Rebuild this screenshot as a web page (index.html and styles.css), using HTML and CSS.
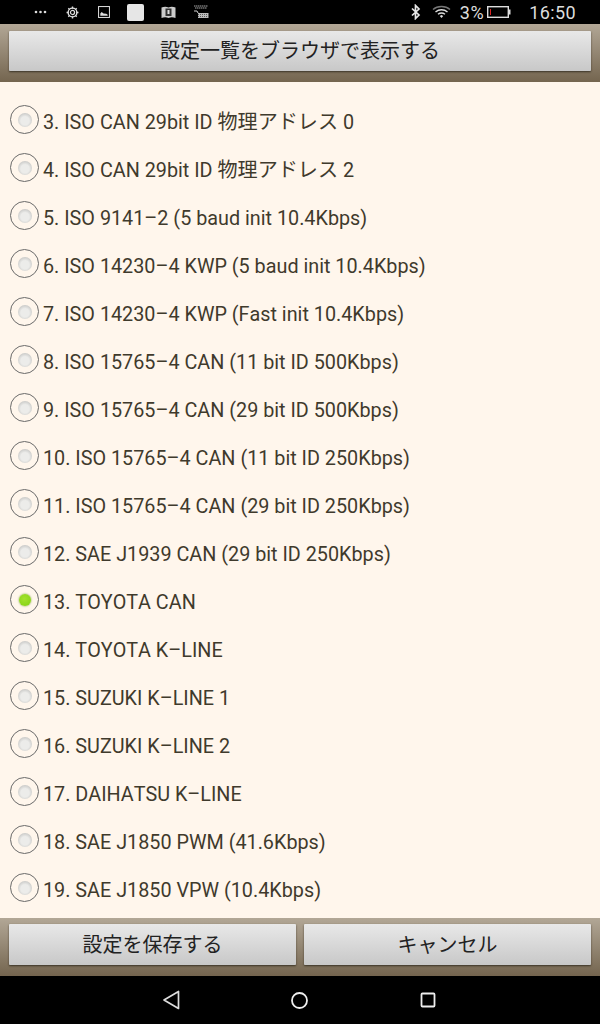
FILE: index.html
```html
<!DOCTYPE html>
<html lang="ja">
<head>
<meta charset="utf-8">
<title>設定</title>
<link rel="stylesheet" href="styles.css">
</head>
<body>
<div class="screen">
  <div class="status">
    <div class="status-left">
      <svg class="i-dots" width="13" height="4" viewBox="0 0 13 4"><circle cx="2" cy="2" r="1.300" fill="#ddd"/><circle cx="6.500" cy="2" r="1.300" fill="#ddd"/><circle cx="11" cy="2" r="1.300" fill="#ddd"/></svg>
      <svg class="i-gear" width="13" height="13" viewBox="0 0 14 14"><circle cx="7" cy="7" r="2.200" fill="none" stroke="#ddd" stroke-width="1.300"/><circle cx="7" cy="7" r="4.700" fill="none" stroke="#ddd" stroke-width="1.500"/><path d="M7 .6v2M7 11.400v2M.6 7h2M11.400 7h2M2.500 2.500l1.400 1.400M10.100 10.100l1.400 1.400M2.500 11.500l1.400-1.400M10.100 3.900l1.400-1.400" stroke="#ddd" stroke-width="1.500"/></svg>
      <svg class="i-pic" width="12" height="12" viewBox="0 0 13 13"><rect x=".6" y=".6" width="11.800" height="11.800" fill="none" stroke="#ddd" stroke-width="1.100"/><path d="M2.500 10.500V8l1.500-1.500 2 1.500 3 .5 1.500 1v1z" fill="#ddd"/></svg>
      <span class="i-white"></span>
      <svg class="i-book" width="15" height="13" viewBox="0 0 15 13"><path d="M.5 1.500C3 .5 5.500.5 7.500 1.500 9.500.5 12 .5 14.500 1.500V12C12 11 9.500 11 7.500 12 5.500 11 3 11 .5 12z" fill="#ccc"/><rect x="4.500" y="2.500" width="6" height="7.500" fill="#333"/><rect x="6.500" y="4" width="2" height="4" fill="#ddd"/></svg>
      <svg class="i-cart" width="16" height="14" viewBox="0 0 16 14"><path d="M1 1h14M2 3h12" stroke="#aaa" stroke-width="1" stroke-dasharray="1.500 .5"/><path d="M1 6h3l1 2" stroke="#ccc" stroke-width="1" fill="none"/><rect x="5" y="8" width="10.500" height="5" fill="#bbb"/><path d="M5 9.500h10.500M5 11.500h10.500" stroke="#444" stroke-width=".8" stroke-dasharray="1 1"/></svg>
    </div>
    <div class="status-right">
      <svg class="i-bt" width="10" height="16" viewBox="0 0 10 16"><path d="M1 4.500l7 6.500-3.500 3.500V1.500L8 5 1 11.500" fill="none" stroke="#e8e8e8" stroke-width="1.700"/></svg>
      <svg class="i-wifi" width="19" height="14" viewBox="0 0 19 14"><path d="M1 4.500C5.500.5 13.500.5 18 4.500" fill="none" stroke="#777" stroke-width="1.400"/><path d="M3.500 7C7 4 12 4 15.500 7" fill="none" stroke="#ddd" stroke-width="1.400"/><path d="M6 9.300C8 7.800 11 7.800 13 9.300" fill="none" stroke="#ddd" stroke-width="1.400"/><path d="M7.800 11l1.700-1 1.700 1-1.700 2z" fill="#ddd"/></svg>
      <span class="pct">3%</span>
      <svg class="i-batt" width="24" height="12" viewBox="0 0 24 12"><rect x=".7" y=".7" width="20.600" height="10.600" fill="none" stroke="#ddd" stroke-width="1.400"/><rect x="21.500" y="3.500" width="2" height="5" fill="#ddd"/><rect x="3" y="3" width="1" height="6" fill="#d22"/></svg>
      <span class="clock">16:50</span>
    </div>
  </div>

  <div class="bar bar-top">
    <button class="btn" type="button">設定一覧をブラウザで表示する</button>
  </div>

  <ul class="list">
    <li class="row"><span class="radio"></span><span class="label">3. ISO CAN 29bit ID <span class="cjk">物理アドレス</span> 0</span></li>
    <li class="row"><span class="radio"></span><span class="label">4. ISO CAN 29bit ID <span class="cjk">物理アドレス</span> 2</span></li>
    <li class="row"><span class="radio"></span><span class="label">5. ISO 9141–2 (5 baud init 10.4Kbps)</span></li>
    <li class="row"><span class="radio"></span><span class="label">6. ISO 14230–4 KWP (5 baud init 10.4Kbps)</span></li>
    <li class="row"><span class="radio"></span><span class="label">7. ISO 14230–4 KWP (Fast init 10.4Kbps)</span></li>
    <li class="row"><span class="radio"></span><span class="label">8. ISO 15765–4 CAN (11 bit ID 500Kbps)</span></li>
    <li class="row"><span class="radio"></span><span class="label">9. ISO 15765–4 CAN (29 bit ID 500Kbps)</span></li>
    <li class="row"><span class="radio"></span><span class="label">10. ISO 15765–4 CAN (11 bit ID 250Kbps)</span></li>
    <li class="row"><span class="radio"></span><span class="label">11. ISO 15765–4 CAN (29 bit ID 250Kbps)</span></li>
    <li class="row"><span class="radio"></span><span class="label">12. SAE J1939 CAN (29 bit ID 250Kbps)</span></li>
    <li class="row"><span class="radio on"></span><span class="label">13. TOYOTA CAN</span></li>
    <li class="row"><span class="radio"></span><span class="label">14. TOYOTA K–LINE</span></li>
    <li class="row"><span class="radio"></span><span class="label">15. SUZUKI K–LINE 1</span></li>
    <li class="row"><span class="radio"></span><span class="label">16. SUZUKI K–LINE 2</span></li>
    <li class="row"><span class="radio"></span><span class="label">17. DAIHATSU K–LINE</span></li>
    <li class="row"><span class="radio"></span><span class="label">18. SAE J1850 PWM (41.6Kbps)</span></li>
    <li class="row"><span class="radio"></span><span class="label">19. SAE J1850 VPW (10.4Kbps)</span></li>
  </ul>

  <div class="bar bar-bottom">
    <button class="btn" type="button">設定を保存する</button>
    <button class="btn" type="button">キャンセル</button>
  </div>

  <div class="nav">
    <svg width="18" height="20" viewBox="0 0 18 20"><path d="M15.500 1.500v17L1 10z" fill="none" stroke="#ddd" stroke-width="1.700" stroke-linejoin="round"/></svg>
    <svg width="17" height="17" viewBox="0 0 17 17"><circle cx="8.500" cy="8.500" r="7.500" fill="none" stroke="#eee" stroke-width="1.800"/></svg>
    <svg class="nav-square" width="16" height="16" viewBox="0 0 16 16"><rect x="1.500" y="1.500" width="13" height="13" rx="1" fill="none" stroke="#eee" stroke-width="1.800"/></svg>
  </div>
</div>
</body>
</html>
```
FILE: styles.css
```css
* { box-sizing: border-box; }
html, body { margin: 0; padding: 0; background: #000; }
body { font-family: Roboto, "Noto Sans CJK JP", sans-serif; }
.screen { width: 600px; height: 1024px; display: flex; flex-direction: column; overflow: hidden; }

.status { height: 24px; flex: none; background: #000; display: flex; justify-content: space-between; align-items: center; }
.status-left { display: flex; align-items: center; padding-left: 34px; }
.i-gear { margin-left: 19px; }
.i-pic { margin-left: 19px; }
.i-white { width: 17px; height: 17px; margin-left: 17px; background: #e6e6e6; border-radius: 2px; }
.i-book { margin-left: 17px; }
.i-cart { margin-left: 17px; }
.status-right { display: flex; align-items: center; padding-right: 24px; color: #ddd; font-size: 18px; }
.i-wifi { margin-left: 11px; }
.pct { margin-left: 9px; letter-spacing: .5px; }
.i-batt { margin-left: 3px; }
.clock { margin-left: 18px; letter-spacing: .4px; }

.bar { height: 58px; flex: none; display: flex; gap: 8px; padding: 7px 9px 11px; background: linear-gradient(#b2a796, #74654f); }
.bar-bottom { padding: 6px 9px 11px; }
.btn { flex: 1 1 0; min-width: 0; height: 100%; padding: 0; border: 0; border-radius: 1px; background: linear-gradient(#e8e8e8, #c8c8c8); box-shadow: 0 1px 2px rgba(30, 25, 15, .7); color: #222; font-family: inherit; font-size: 20px; line-height: 1; }

.list { height: 836px; flex: none; margin: 0; padding: 16px 0 4px; list-style: none; background: #fff6ec; }
.row { height: 48px; display: flex; align-items: center; padding-left: 10px; gap: 4px; }
.radio { flex: none; width: 29px; height: 29px; margin-top: -5px; border-radius: 50%; border: 1px solid #6a6a6a; background: #fff6ec; display: flex; align-items: center; justify-content: center; }
.radio::after { content: ""; width: 14px; height: 14px; border-radius: 50%; background: radial-gradient(circle at 50% 56%, #ececea 40%, #b0b0ae 100%); }
.radio.on::after { width: 12px; height: 12px; background: radial-gradient(circle at 45% 40%, #a4e22e, #80d010); box-shadow: 0 0 2px #6a9a20; }
.label { font-size: 19.8px; line-height: 24px; margin-top: 2px; color: #3f3a2c; white-space: nowrap; font-kerning: none; }
.cjk { font-size: 20.1px; line-height: 1; }

.nav { height: 48px; flex: none; background: #000; display: flex; align-items: center; padding-left: 163px; gap: 110px; }
.nav-square { margin-left: 2px; }
```
